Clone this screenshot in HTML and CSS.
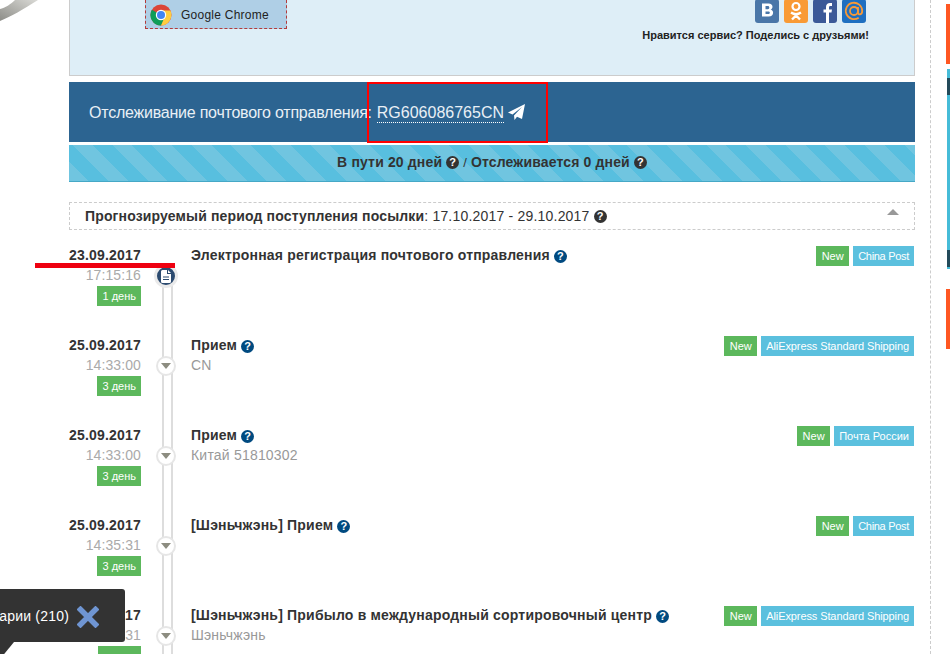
FILE: index.html
```html
<!DOCTYPE html>
<html lang="ru">
<head>
<meta charset="utf-8">
<title>Отслеживание</title>
<link rel="stylesheet" href="styles.css">
</head>
<body>
<svg class="bird" width="40" height="24" viewBox="0 0 40 24"><defs><linearGradient id="wing" x1="0" y1="1" x2="1" y2="0"><stop offset="0" stop-color="#8d8d88"/><stop offset="1" stop-color="#d9d9d5"/></linearGradient></defs><path d="M0 21 C10 17 24 9 38 0 H15 C11 4 5 8 0 9Z" fill="url(#wing)"/></svg>
<main class="page">
  <section class="promo">
    <a class="chrome">
      <svg class="chrome-icon" width="22" height="22" viewBox="0 0 22 22">
        <circle cx="11" cy="11" r="10.5" fill="#db4437"/>
        <path d="M11 11 L1.900 5.700 A10.500 10.500 0 0 0 11 21.500 L16.200 12Z" fill="#0f9d58"/>
        <path d="M11 6.500 H20.400 A10.500 10.500 0 0 1 11 21.500 L15.500 11Z" fill="#ffcd40"/>
        <circle cx="11" cy="11" r="5.200" fill="#fff"/>
        <circle cx="11" cy="11" r="4" fill="#4285f4"/>
      </svg>
      <span>Google Chrome</span>
    </a>
    <div class="share">
      <div class="socials">
        <svg class="soc" viewBox="0 0 24 24"><rect width="24" height="24" rx="3" fill="#4a76a8"/><path d="M7 4.500h6.500c2.600 0 4 1.300 4 3.200 0 1.400-.8 2.400-1.900 2.800 1.500.4 2.500 1.600 2.500 3.200 0 2.200-1.600 3.800-4.400 3.800H7zM10.500 7v3.300h2.300c1 0 1.500-.7 1.500-1.700S13.800 7 12.800 7zM10.500 12.600V15h2.600c1.100 0 1.700-.5 1.700-1.300s-.6-1.100-1.700-1.100z" fill="#fff" fill-rule="evenodd"/></svg>
        <svg class="soc" viewBox="0 0 24 24"><rect width="24" height="24" rx="3" fill="#f99a35"/><circle cx="12" cy="7.500" r="3.500" fill="none" stroke="#fff" stroke-width="2.200"/><path d="M7 13.500c3 2 7 2 10 0M12 15.500v1l-4 4M12 16.500l4 4" fill="none" stroke="#fff" stroke-width="2.400"/></svg>
        <svg class="soc" viewBox="0 0 24 24"><rect width="24" height="24" rx="3" fill="#3b5998"/><path d="M13 24V13.500h-2.500v-3H13V8c0-2.800 1.600-4 4-4h2v3h-1.500c-1.100 0-1.500.5-1.500 1.500v2h3l-.5 3H16V24z" fill="#fff"/></svg>
        <svg class="soc" viewBox="0 0 24 24"><rect width="24" height="24" rx="3" fill="#1f6fc0"/><circle cx="12" cy="12" r="4" fill="none" stroke="#f99a35" stroke-width="1.800"/><path d="M16 8v5.500c0 2.800 4.200 2.600 4.200-1.500a8.200 8.200 0 1 0-3.500 6.700" fill="none" stroke="#f99a35" stroke-width="1.800"/></svg>
      </div>
      <p class="share-text">Нравится сервис? Поделись с друзьями!</p>
    </div>
  </section>

  <section class="track-head">
    <span class="track-label">Отслеживание почтового отправления:</span>
    <a class="track-no">RG606086765CN</a>
    <svg class="plane" width="17" height="16" viewBox="0 0 17 16"><path d="M17 0 L14 15 L9 12.800 L6.500 16 L6 11.500 L14 3 L4.500 10.500 L0 8.500Z" fill="#fff"/></svg>
  </section>

  <section class="stripe">
    <b>В пути 20 дней</b><i class="help dark">?</i><span class="sep">/</span><b>Отслеживается 0 дней</b><i class="help dark">?</i>
  </section>

  <section class="forecast">
    <b>Прогнозируемый период поступления посылки</b><span>: 17.10.2017 - 29.10.2017</span><i class="help dark">?</i>
    <span class="caret"></span>
  </section>

  <section class="timeline">
    <article class="row">
      <div class="when"><b>23.09.2017</b><time>17:15:16</time><span class="days">1 день</span></div>
      <div class="rail"><span class="node doc"><svg width="12" height="13" viewBox="0 0 12 13"><path d="M1 1.500A1.500 1.500 0 0 1 2.500 0H7v4h4v7.500A1.500 1.500 0 0 1 9.500 13h-7A1.500 1.500 0 0 1 1 11.500zM8 0l3 3H8zM3 6.500v1h6v-1zM3 9v1h6V9z" fill="#fff" fill-rule="evenodd"/></svg></span></div>
      <div class="what"><h3>Электронная регистрация почтового отправления<i class="help">?</i></h3></div>
      <div class="tags"><span class="tag new">New</span><span class="tag svc short">China Post</span></div>
    </article>
    <article class="row">
      <div class="when"><b>25.09.2017</b><time>14:33:00</time><span class="days">3 день</span></div>
      <div class="rail"><span class="node"></span></div>
      <div class="what"><h3>Прием<i class="help">?</i></h3><p>CN</p></div>
      <div class="tags"><span class="tag new">New</span><span class="tag svc long">AliExpress Standard Shipping</span></div>
    </article>
    <article class="row">
      <div class="when"><b>25.09.2017</b><time>14:33:00</time><span class="days">3 день</span></div>
      <div class="rail"><span class="node"></span></div>
      <div class="what"><h3>Прием<i class="help">?</i></h3><p>Китай 51810302</p></div>
      <div class="tags"><span class="tag new">New</span><span class="tag svc">Почта России</span></div>
    </article>
    <article class="row">
      <div class="when"><b>25.09.2017</b><time>14:35:31</time><span class="days">3 день</span></div>
      <div class="rail"><span class="node"></span></div>
      <div class="what"><h3>[Шэньчжэнь] Прием<i class="help">?</i></h3></div>
      <div class="tags"><span class="tag new">New</span><span class="tag svc short">China Post</span></div>
    </article>
    <article class="row">
      <div class="when"><b>25.09.2017</b><time>14:35:31</time><span class="days"></span></div>
      <div class="rail"><span class="node"></span></div>
      <div class="what"><h3>[Шэньчжэнь] Прибыло в международный сортировочный центр<i class="help">?</i></h3><p>Шэньчжэнь</p></div>
      <div class="tags"><span class="tag new">New</span><span class="tag svc long">AliExpress Standard Shipping</span></div>
    </article>
  </section>
</main>

<div class="red-box"></div>
<div class="red-line"></div>

<aside class="side">
  <span class="ad orange a1"></span>
  <span class="ad teal"><span class="knob k1"></span><span class="knob k2"></span></span>
  <span class="ad orange a2"></span>
</aside>

<div class="toast"><span class="toast-text">арии (210)</span><svg class="toast-x" width="22" height="22" viewBox="0 0 22 22"><path d="M3.500 3.500 L18.500 18.500 M18.500 3.500 L3.500 18.500" stroke="#6f95d2" stroke-width="5.500" stroke-linecap="square"/></svg><span class="toast-tail"></span></div>
</body>
</html>
```
FILE: styles.css
```css
* { box-sizing: border-box; }
html, body { margin: 0; padding: 0; height: 654px; overflow: hidden; background: #fff; }
body { position: relative; font-family: "Liberation Sans", Arial, sans-serif; color: #333; font-size: 14px; }
.bird { position: absolute; left: 0; top: 0; }
.page { width: 846px; margin-left: 69px; }
.promo { height: 76px; background: #deeef7; border: 1px solid #ccc; border-top: 0; display: flex; justify-content: space-between; padding: 0 45px 0 75px; }
.chrome { width: 142px; height: 29px; background: #afcfe6; border: 1px dashed #b33a3a; border-top: 0; display: flex; align-items: center; gap: 9px; padding-left: 4px; color: #222; font-size: 12px; letter-spacing: .25px; }
.chrome span { margin-top: 2px; }
.chrome-icon { flex: none; margin-top: 2px; }
.share { display: flex; flex-direction: column; align-items: flex-end; }
.socials { display: flex; gap: 5px; margin-top: -1px; margin-right: 3px; }
.soc { width: 24px; height: 24px; display: block; }
.share-text { margin: 6px 0 0; font-size: 11px; font-weight: 700; color: #222; }
.track-head { margin-top: 6px; height: 60px; background: #2c6491; color: #e9f0f6; display: flex; align-items: center; padding: 2px 0 0 20px; font-size: 16px; }
.track-label { letter-spacing: -.23px; }
.track-no { margin-left: 5px; border-bottom: 1px dotted #fff; line-height: 18px; }
.plane { margin-left: 4px; margin-top: -2px; }
.stripe { margin-top: 3px; height: 37px; border-bottom: 1px solid #46a8c6; padding-bottom: 2px; background: repeating-linear-gradient(45deg, #70c5e0 0 14px, #58bfdf 14px 28px); display: flex; align-items: center; justify-content: center; font-size: 14px; letter-spacing: .15px; color: #333; }
.sep { margin: 0 4px; font-size: 13px; }
.help { display: inline-flex; align-items: center; justify-content: center; width: 13px; height: 13px; border-radius: 50%; background: #004a80; color: #fff; font-size: 11px; font-style: normal; font-weight: 700; margin-left: 4px; vertical-align: 0; line-height: 1; letter-spacing: 0; }
.help.dark { background: #333; }
.forecast { position: relative; margin-top: 20px; height: 28px; border: 1px dashed #ccc; display: flex; align-items: center; padding-left: 15px; font-size: 14px; letter-spacing: .15px; }
.forecast span { letter-spacing: .2px; }
.caret { position: absolute; right: 15px; top: 6px; border: 6px solid transparent; border-top: 0; border-bottom: 6px solid #999; }
.timeline { margin-top: 15px; }
.row { display: flex; height: 90px; }
.when { width: 72px; flex: none; display: flex; flex-direction: column; align-items: flex-end; }
.when b { font-size: 14px; line-height: 20px; letter-spacing: .2px; white-space: nowrap; }
.when time { font-size: 14px; line-height: 18px; margin: 1px 0 2px; color: #aaa; letter-spacing: .1px; }
.days { background: #5cb85c; color: #fff; font-size: 11px; line-height: 20px; height: 20px; min-width: 43px; padding: 0 5px; white-space: nowrap; }
.rail { width: 50px; flex: none; position: relative; }
.rail::before { content: ""; position: absolute; left: 21px; top: 0; bottom: 0; width: 7px; background: #fff; border: solid #ddd; border-width: 0 2px; }
.row:first-child .rail::before { top: 40px; }
.node { position: absolute; left: 15px; top: 21px; width: 20px; height: 20px; border-radius: 50%; background: #fff; border: 2px solid #e6e6e6; display: flex; align-items: center; justify-content: center; }
.node::after { content: ""; border: 5px solid transparent; border-bottom: 0; border-top: 6px solid #8c8c80; }
.node.doc { top: 19px; left: 13px; width: 24px; height: 24px; background: #2b4a6f; border: 3px solid #eaeaea; }
.node.doc::after { display: none; }
.what { flex: 1; min-width: 0; }
.what h3 { margin: 0; font-size: 14px; line-height: 20px; font-weight: 700; letter-spacing: .2px; color: #333; }
.what p { margin: 1px 0 0; font-size: 14px; line-height: 18px; color: #999; letter-spacing: .2px; }
.tags { display: flex; gap: 4px; align-items: flex-start; flex: none; margin-top: 1px; margin-right: 1px; }
.tag { height: 20px; line-height: 20px; color: #fff; font-size: 11px; padding: 0 5px; }
.new { background: #5cb85c; min-width: 33px; text-align: center; }
.svc { background: #5bc0de; }
.short { letter-spacing: -.3px; }
.long { letter-spacing: -.1px; }
.red-box { position: absolute; left: 367px; top: 82px; width: 181px; height: 61px; border: 2px solid #f00; }
.red-line { position: absolute; left: 35px; top: 263px; width: 140px; height: 5px; background: #ee0010; }
.side { position: absolute; left: 930px; top: 0; width: 20px; height: 654px; border-left: 1px dashed #ccc; }
.ad { position: absolute; display: block; }
.orange { left: 15px; width: 5px; height: 60px; background: #ff5722; }
.a1 { top: 4px; }
.a2 { top: 289px; }
.teal { left: 16px; top: 69px; width: 4px; height: 200px; background: #46bcd8; }
.knob { position: absolute; left: 0; width: 4px; height: 17px; background: #234a5a; }
.k1 { top: 9px; }
.k2 { top: 181px; }
.toast { position: absolute; left: 0; top: 589px; width: 125px; height: 53px; background: #333; border-radius: 0 3px 3px 0; color: #fff; font-size: 14px; white-space: nowrap; }
.toast-text { position: absolute; right: 56px; top: 19px; letter-spacing: .2px; }
.toast-x { position: absolute; right: 26px; top: 17px; }
.toast-tail { position: absolute; left: 0; top: 53px; width: 14px; height: 12px; background: #333; clip-path: polygon(0 0, 100% 0, 30% 100%, 0 100%); }
```
